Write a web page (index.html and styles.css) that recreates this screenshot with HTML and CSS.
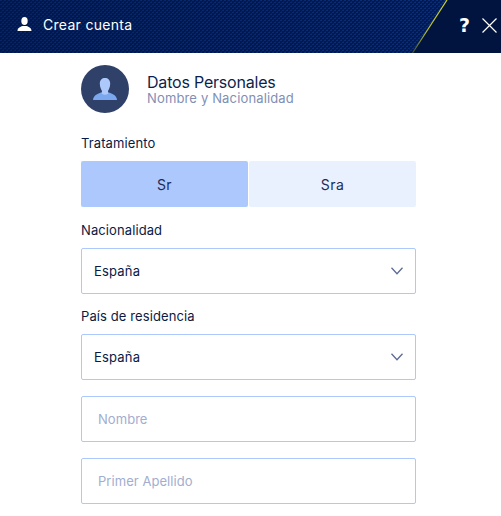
FILE: index.html
```html
<!DOCTYPE html>
<html lang="es">
<head>
    <meta charset="UTF-8">
    <meta name="viewport" content="width=device-width, initial-scale=1.0">
    <title>Crear cuenta</title>
    <link rel="stylesheet" href="styles.css">
</head>
<body>

    <!-- Cabecera -->
    <header class="cabecera">
        <svg class="cabecera-raya" width="501" height="53" viewBox="0 0 501 53" shape-rendering="crispEdges">
            <defs>
                <pattern id="trama" width="4" height="4" patternUnits="userSpaceOnUse">
                    <rect width="4" height="4" fill="#021a50"/>
                    <rect x="0" y="0" width="2" height="1" fill="#0b2f7e"/>
                    <rect x="3" y="1" width="1" height="1" fill="#082567"/>
                    <rect x="2" y="2" width="2" height="1" fill="#0b2f7e"/>
                    <rect x="1" y="3" width="1" height="1" fill="#082567"/>
                </pattern>
                <linearGradient id="sombra" x1="0" y1="0" x2="1" y2="0">
                    <stop offset="0" stop-color="#01143f" stop-opacity="0.4"/>
                    <stop offset="1" stop-color="#01143f" stop-opacity="0"/>
                </linearGradient>
                <linearGradient id="raya" gradientUnits="userSpaceOnUse" x1="0" y1="0" x2="0" y2="53">
                    <stop offset="0" stop-color="#d2d62a"/>
                    <stop offset="0.6" stop-color="#b8bd2c"/>
                    <stop offset="1" stop-color="#3f4f3c"/>
                </linearGradient>
            </defs>
            <rect width="501" height="53" fill="url(#trama)"/>
            <rect width="501" height="53" fill="url(#sombra)"/>
            <polygon points="447,0 501,0 501,53 412,53" fill="#01143f" shape-rendering="auto"/>
            <line x1="447" y1="0" x2="412.5" y2="53" stroke="url(#raya)" stroke-width="1.2" shape-rendering="auto"/>
        </svg>
        <div class="cabecera-titulo">
            <svg width="15" height="14" viewBox="0 0 15 14">
                <ellipse cx="7.5" cy="4" rx="3.2" ry="4" fill="#fff"/>
                <path d="M0.5 14 C0.5 10.8 3 10 5.5 9 L9.5 9 C12 10 14.5 10.8 14.5 14 Z" fill="#fff"/>
            </svg>
            <span>Crear cuenta</span>
        </div>
        <div class="cabecera-acciones">
            <span class="ayuda">?</span>
            <svg width="15" height="15" viewBox="0 0 15 15">
                <path d="M0.5 0.5 L14.5 14.5 M14.5 0.5 L0.5 14.5" stroke="#fff" stroke-width="1.2" fill="none"/>
            </svg>
        </div>
    </header>

    <main class="formulario">
        <!-- Paso -->
        <div class="paso">
            <div class="avatar">
                <svg width="24" height="22" viewBox="0 0 24 22">
                    <path d="M0 22 C0.5 18 2.5 16.5 8 14.5 L16 14.5 C21.5 16.5 23.5 18 24 22 Z" fill="#7ba7ee"/>
                    <path d="M6.8 5.5 C6.8 2 9 0 12 0 C15 0 17.2 2 17.2 5.5 C17.2 9 15.8 11.5 15 13 L15.4 15.5 Q12 18 8.6 15.5 L9 13 C8.2 11.5 6.8 9 6.8 5.5 Z" fill="#adc8fb"/>
                </svg>
            </div>
            <div class="paso-textos">
                <div class="paso-titulo">Datos Personales</div>
                <div class="paso-sub">Nombre y Nacionalidad</div>
            </div>
        </div>

        <div class="etiqueta etiqueta-primera">Tratamiento</div>
        <div class="tratamiento">
            <div class="opcion activa">Sr</div>
            <div class="opcion">Sra</div>
        </div>

        <div class="etiqueta">Nacionalidad</div>
        <div class="campo">
            <span>España</span>
            <svg class="flecha" width="12" height="8" viewBox="0 0 12 8">
                <path d="M0.5 0.7 L6 6.7 L11.5 0.7" stroke="#5d6b94" stroke-width="1.3" fill="none"/>
            </svg>
        </div>

        <div class="etiqueta etiqueta-pais">País de residencia</div>
        <div class="campo">
            <span>España</span>
            <svg class="flecha" width="12" height="8" viewBox="0 0 12 8">
                <path d="M0.5 0.7 L6 6.7 L11.5 0.7" stroke="#5d6b94" stroke-width="1.3" fill="none"/>
            </svg>
        </div>

        <div class="campo campo-texto vacio">Nombre</div>
        <div class="campo campo-texto vacio">Primer Apellido</div>
    </main>

</body>
</html>
```

FILE: styles.css
```css
html, body {
    height: 516px;
    overflow: hidden;
}
body {
    margin: 0;
    font-family: Inter, sans-serif;
    background-color: #fff;
    color: #0a1a44;
}
.cabecera {
    position: relative;
    height: 53px;
    display: flex;
    align-items: center;
    justify-content: space-between;
    color: #fff;
    background-color: #021a52;
}
.cabecera-raya {
    position: absolute;
    left: 0;
    top: 0;
}
.cabecera-titulo {
    position: relative;
    display: flex;
    align-items: center;
    gap: 11px;
    padding-left: 17px;
    font-size: 14px;
    margin-top: -5px;
    letter-spacing: 0.3px;
}
.cabecera-acciones {
    position: relative;
    display: flex;
    align-items: center;
    gap: 12px;
    padding-right: 4px;
    margin-top: -3px;
}
.ayuda {
    font-family: "DejaVu Sans", sans-serif;
    font-size: 19px;
    font-weight: bold;
}
.formulario {
    width: 335px;
    margin-left: 81px;
}
.paso {
    display: flex;
    align-items: center;
    gap: 18px;
    margin-top: 12px;
}
.avatar {
    width: 48px;
    height: 48px;
    border-radius: 50%;
    background-color: #2f4069;
    display: flex;
    align-items: center;
    justify-content: center;
}
.paso-titulo {
    font-size: 16px;
    line-height: 18px;
    letter-spacing: -0.2px;
    color: #0d1f4c;
}
.paso-sub {
    font-size: 13px;
    line-height: 14px;
    letter-spacing: 0.15px;
    color: #7f8fb5;
}
.etiqueta {
    font-size: 13px;
    line-height: 18px;
    margin-top: 14px;
    margin-bottom: 9px;
    letter-spacing: 0.1px;
}
.etiqueta-primera {
    margin-top: 21px;
}
.etiqueta-pais {
    margin-top: 13px;
}
.tratamiento {
    display: flex;
    gap: 1px;
    height: 46px;
}
.opcion {
    flex: 1;
    display: flex;
    align-items: center;
    justify-content: center;
    font-size: 14px;
    letter-spacing: 0.4px;
    background-color: #e9f0fe;
    border-radius: 2px;
    color: #1d2c55;
}
.opcion.activa {
    background-color: #adc8fd;
}
.campo {
    height: 46px;
    box-sizing: border-box;
    border: 1px solid #adc8fd;
    border-radius: 2px;
    display: flex;
    align-items: center;
    justify-content: space-between;
    padding: 0 12px;
    font-size: 13px;
    letter-spacing: 0.2px;
}
.campo-texto {
    margin-top: 16px;
    padding: 0 16px;
}
.vacio {
    color: #a2add0;
    letter-spacing: 0.05px;
}
```
